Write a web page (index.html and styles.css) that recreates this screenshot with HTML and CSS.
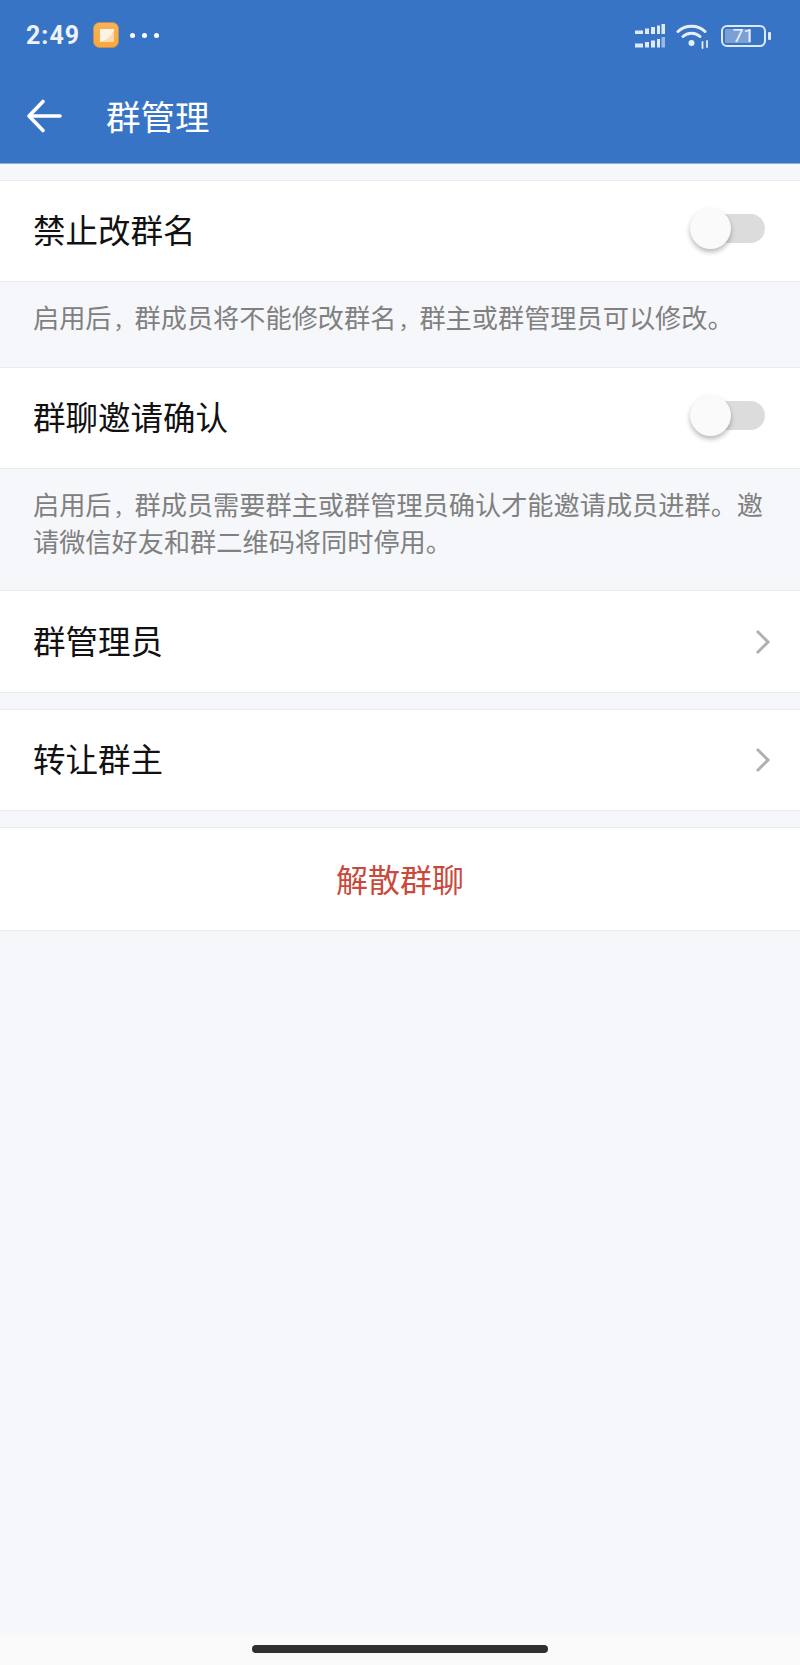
FILE: index.html
```html
<!DOCTYPE html>
<html lang="zh-CN">
<head>
<meta charset="utf-8">
<title>群管理</title>
<link rel="stylesheet" href="styles.css">
</head>
<body>
<div class="screen">
  <header class="appbar">
    <div class="status">
      <div class="status-left">
        <span class="time">2:49</span>
        <svg class="app-icon" width="26" height="26" viewBox="0 0 26 26">
          <defs><linearGradient id="g" x1="0" y1="0" x2="0" y2="1"><stop offset="0" stop-color="#f5b45a"/><stop offset="1" stop-color="#fda63c"/></linearGradient></defs>
          <rect x="0.5" y="0.5" width="25" height="25" rx="6" fill="url(#g)" stroke="#b98f5e" stroke-width="1"/>
          <path d="M7 7h14v13H7z" fill="#fbd9a8"/>
          <path d="M7 7h14c-1 6-6 11-14 13z" fill="#fdf3e4"/>
        </svg>
        <span class="dots"><i></i><i></i><i></i></span>
      </div>
      <div class="status-right">
        <svg width="30" height="24" viewBox="0 0 30 24" fill="#dfe9f7">
          <rect x="0" y="6.500" width="8" height="3.500"/><rect x="10" y="4.500" width="4" height="5.500"/><rect x="16" y="3" width="4" height="7"/><rect x="22" y="1.500" width="3" height="8.500"/><rect x="26.500" y="0" width="3.500" height="10"/>
          <rect x="0" y="19.500" width="8" height="4"/><rect x="10" y="18" width="4" height="5.500"/><rect x="16" y="16.500" width="4" height="7"/><rect x="22" y="15" width="3" height="8.500"/><rect x="26.500" y="13" width="3.500" height="10.500" fill="#9cb9e3"/>
        </svg>
        <svg class="wifi" width="34" height="26" viewBox="0 0 34 26" fill="none" stroke="#e6eef9" stroke-linecap="round">
          <path d="M2 8.500C9 1.500 22 1.500 29 8.500" stroke-width="3"/>
          <path d="M7 13.500C11.500 9 19.500 9 24 13.500" stroke-width="3"/>
          <circle cx="15.500" cy="20" r="3" fill="#e6eef9" stroke="none"/>
          <path d="M26.500 19v6M31 18v6" stroke-width="1.800"/>
        </svg>
        <div class="battery"><div class="cell"><div class="level"></div><span class="pct">71</span></div><div class="nub"></div></div>
      </div>
    </div>
    <div class="toolbar">
      <svg class="back" width="36" height="36" viewBox="0 0 36 36" fill="none" stroke="#fff" stroke-width="3.600" stroke-linecap="round" stroke-linejoin="round">
        <path d="M3 18H34M17 3.500 3 18 17 32.500"/>
      </svg>
      <h1 class="title">群管理</h1>
    </div>
  </header>

  <main class="content">
    <section class="row">
      <span class="label">禁止改群名</span>
      <span class="switch"><span class="knob"></span></span>
    </section>
    <p class="note one">启用后<span class="comma">，</span>群成员将不能修改群名<span class="comma">，</span>群主或群管理员可以修改。</p>
    <section class="row">
      <span class="label">群聊邀请确认</span>
      <span class="switch"><span class="knob"></span></span>
    </section>
    <p class="note two">启用后<span class="comma">，</span>群成员需要群主或群管理员确认才能邀请成员进群。邀请微信好友和群二维码将同时停用。</p>
    <section class="row tall">
      <span class="label">群管理员</span>
      <svg class="chev" width="16" height="26" viewBox="0 0 16 26" fill="none" stroke="#b0b0b0" stroke-width="3"><path d="M2 2 13 13 2 24"/></svg>
    </section>
    <div class="gap"></div>
    <section class="row">
      <span class="label">转让群主</span>
      <svg class="chev" width="16" height="26" viewBox="0 0 16 26" fill="none" stroke="#b0b0b0" stroke-width="3"><path d="M2 2 13 13 2 24"/></svg>
    </section>
    <div class="gap"></div>
    <section class="row danger">解散群聊</section>
  </main>

  <footer class="navbar"><span class="home"></span></footer>
</div>
</body>
</html>
```
FILE: styles.css
```css
* { box-sizing: border-box; }
html, body { margin: 0; padding: 0; }
body {
  width: 800px;
  height: 1665px;
  overflow: hidden;
  background: #f6f7fb;
  font-family: "Noto Sans CJK SC", "Noto Sans", sans-serif;
}
.screen { display: flex; flex-direction: column; height: 1665px; }

.appbar { height: 164px; background: #3874c6; border-bottom: 1px solid #8fb0d0; flex: none; }
.status { height: 70px; padding: 0 29px 0 26px; display: flex; justify-content: space-between; align-items: center; }
.status-left { display: flex; align-items: center; }
.time { font-family: "Roboto", sans-serif; font-weight: 700; font-size: 25px; color: #eef3fb; letter-spacing: 1px; width: 67px; }
.dots { display: flex; gap: 7px; margin-left: 11px; }
.dots i { width: 5px; height: 5px; border-radius: 50%; background: #fff; display: block; }
.status-right { display: flex; align-items: center; gap: 11px; margin-top: 1px; }
.battery { display: flex; align-items: center; gap: 2px; }
.cell { position: relative; width: 45px; height: 22px; border: 2.500px solid #dfe9f7; border-radius: 6px; padding: 2px; display: flex; }
.level { width: 26px; background: #7ba0d6; border-radius: 1px; }
.pct { position: absolute; left: 0; right: 0; top: -2px; text-align: center; font-family: "Roboto", sans-serif; font-size: 19px; line-height: 22px; color: #eef3fb; }
.nub { width: 3px; height: 8px; background: #dfe9f7; border-radius: 1px; }

.toolbar { display: flex; align-items: center; height: 78px; padding: 13px 0 0 26px; }
.back { flex: none; }
.title { margin: 0 0 0 44px; font-size: 34.500px; font-weight: 400; color: #fff; line-height: 1; }

.content { flex: 1; padding-top: 16px; }
.row {
  height: 102px;
  background: #fff;
  border-top: 1px solid #ebebee;
  border-bottom: 1px solid #ebebee;
  display: flex;
  align-items: center;
  justify-content: space-between;
  padding: 0 29px 0 33px;
}
.row.tall { height: 103px; }
.label { font-size: 32.500px; color: #111; line-height: 1; padding-bottom: 3px; }
.switch { position: relative; width: 70px; height: 29px; margin: 0 6px 5px 0; background: #dcdcdc; border-radius: 15px; display: block; }
.knob { position: absolute; left: -5px; top: -6px; width: 41px; height: 41px; border-radius: 50%; background: #fafafa; box-shadow: 0 3px 5px rgba(0,0,0,.28); }
.note { margin: 0; padding: 18px 33px 0; color: #808080; font-size: 26.200px; line-height: 35px; }
.note.one { height: 85px; }
.note.two { height: 121px; }
.comma { font-size: 21px; margin-left: 2px; }
.gap { height: 16px; }
.chev { flex: none; }
.danger { justify-content: center; height: 104px; color: #c94a3c; font-size: 32px; padding: 0 0 2px; }

.navbar { height: 32px; background: #fafafa; flex: none; display: flex; justify-content: center; padding-top: 12px; }
.home { width: 296px; height: 8px; border-radius: 4px; background: #2f2f2f; display: block; }
```
